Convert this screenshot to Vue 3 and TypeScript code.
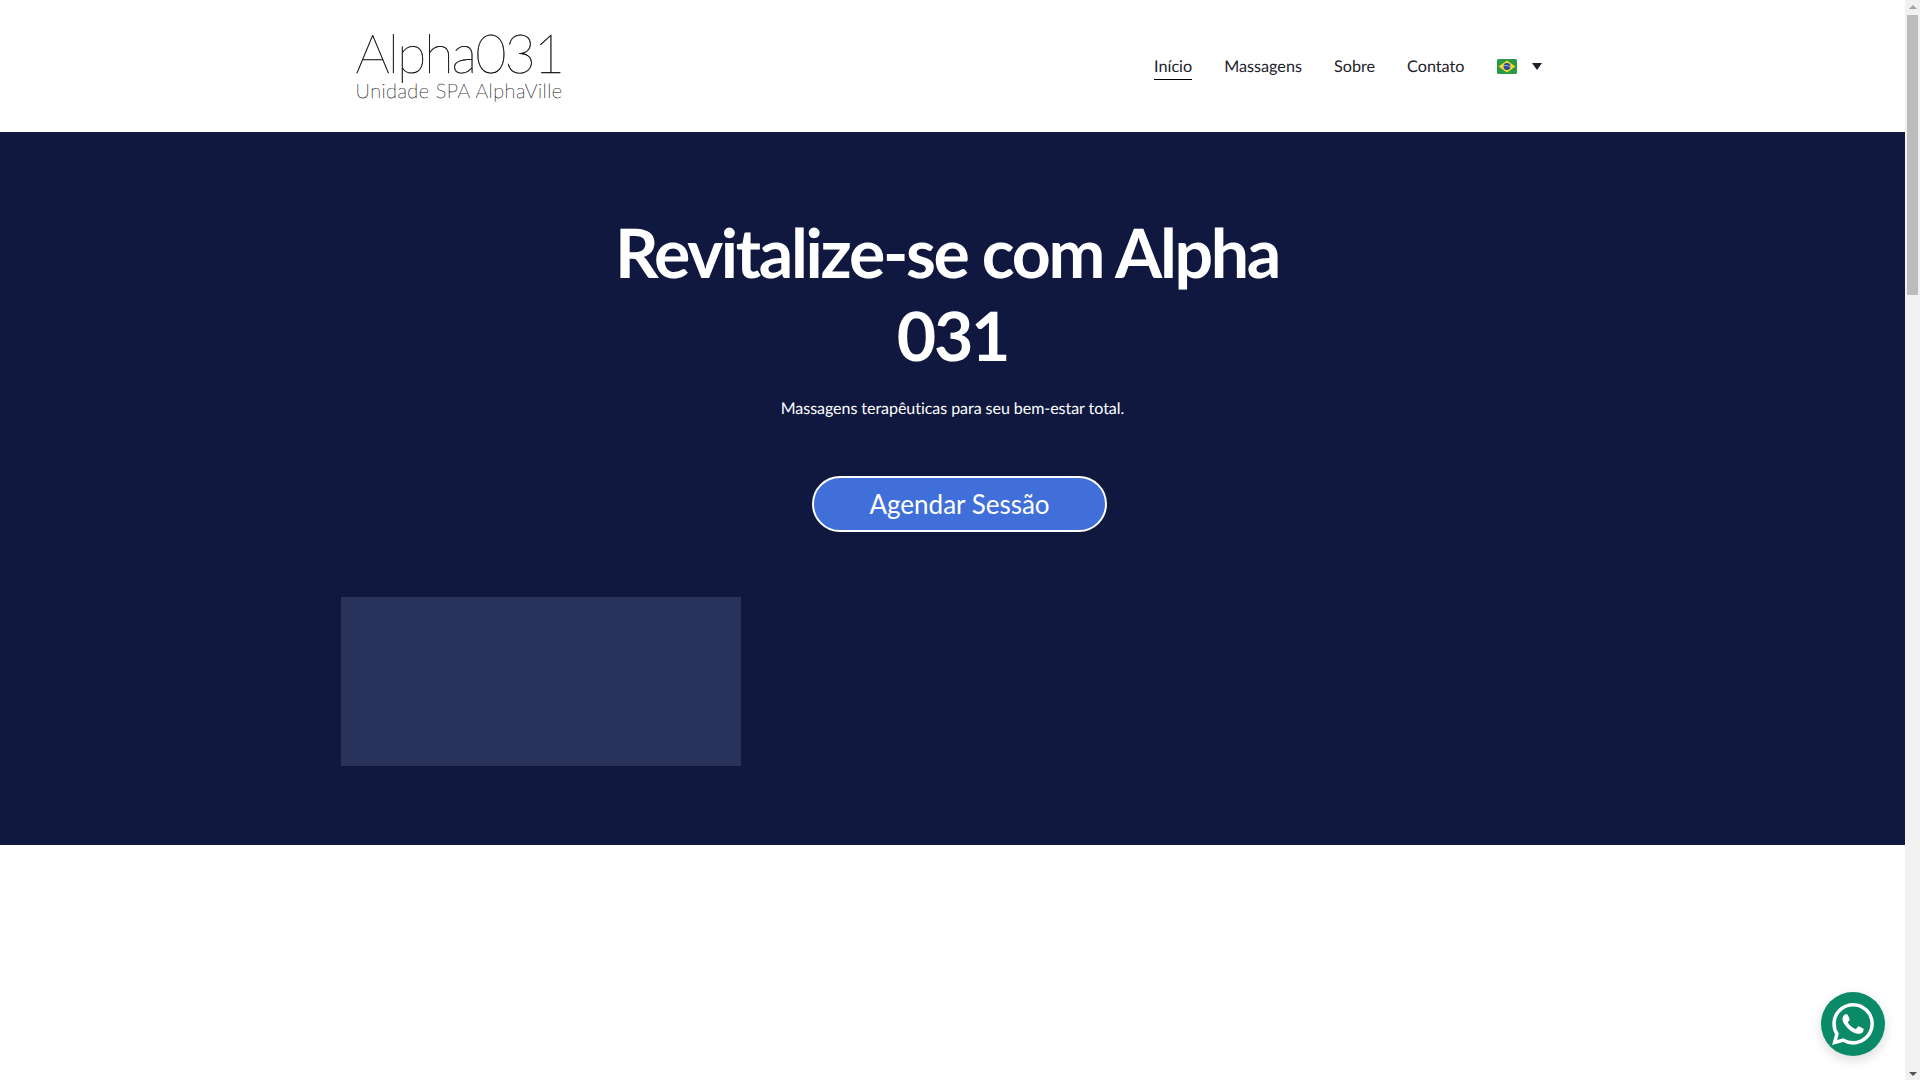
<template>
  <div class="page">
    <div class="main">
      <header class="site-header">
        <div class="container header-row">
          <a class="logo">
            <span class="logo-name">Alpha031</span>
            <span class="logo-sub">Unidade SPA AlphaVille</span>
          </a>
          <nav class="nav">
            <a
              v-for="item in navItems"
              :key="item.label"
              :class="['nav-link', { active: item.active }]"
            >
              {{ item.label }}
            </a>
            <div class="lang">
              <svg class="flag" viewBox="0 0 20 15" width="20" height="15">
                <rect width="20" height="15" rx="1.5" fill="#2a9a46" />
                <polygon points="10,1.6 18.4,7.5 10,13.4 1.6,7.5" fill="#f6d92e" />
                <circle cx="10" cy="7.5" r="3.4" fill="#2b4a9b" />
                <path d="M6.8 6.7c2.2-.4 4.4-.1 6.4 1.1" stroke="#e8eef5" stroke-width=".6" fill="none" />
              </svg>
              <span class="caret"></span>
            </div>
          </nav>
        </div>
      </header>

      <section class="hero">
        <div class="container hero-inner">
          <h1 class="hero-title">Revitalize-se com Alpha 031</h1>
          <p class="hero-text">Massagens terapêuticas para seu bem-estar total.</p>
          <button class="cta">Agendar Sessão</button>
          <div class="hero-card"></div>
        </div>
      </section>

      <a class="whatsapp">
        <svg viewBox="0 0 24 24" width="42" height="42" fill="#fff">
          <path d="M17.472 14.382c-.297-.149-1.758-.867-2.03-.967-.273-.099-.471-.148-.67.15-.197.297-.767.966-.94 1.164-.173.199-.347.223-.644.075-.297-.15-1.255-.463-2.39-1.475-.883-.788-1.48-1.761-1.653-2.059-.173-.297-.018-.458.13-.606.134-.133.298-.347.446-.52.149-.174.198-.298.298-.497.099-.198.05-.371-.025-.52-.075-.149-.669-1.612-.916-2.207-.242-.579-.487-.5-.669-.51-.173-.008-.371-.01-.57-.01-.198 0-.52.074-.792.372-.272.297-1.04 1.016-1.04 2.479 0 1.462 1.065 2.875 1.213 3.074.149.198 2.096 3.2 5.077 4.487.709.306 1.262.489 1.694.625.712.227 1.36.195 1.871.118.571-.085 1.758-.719 2.006-1.413.248-.694.248-1.289.173-1.413-.074-.124-.272-.198-.57-.347m-5.421 7.403h-.004a9.87 9.87 0 01-5.031-1.378l-.361-.214-3.741.982.998-3.648-.235-.374a9.86 9.86 0 01-1.51-5.26c.001-5.45 4.436-9.884 9.888-9.884 2.64 0 5.122 1.03 6.988 2.898a9.825 9.825 0 012.893 6.994c-.003 5.45-4.437 9.884-9.885 9.884m8.413-18.297A11.815 11.815 0 0012.05 0C5.495 0 .16 5.335.157 11.892c0 2.096.547 4.142 1.588 5.945L.057 24l6.305-1.654a11.882 11.882 0 005.683 1.448h.005c6.554 0 11.89-5.335 11.893-11.893a11.821 11.821 0 00-3.48-8.413z" />
        </svg>
      </a>
    </div>

    <div class="scrollbar">
      <span class="arrow up"></span>
      <span class="thumb"></span>
      <span class="arrow down"></span>
    </div>
  </div>
</template>

<script setup lang="ts">
const navItems = [
  { label: 'Início', active: true },
  { label: 'Massagens', active: false },
  { label: 'Sobre', active: false },
  { label: 'Contato', active: false }
];
</script>

<style>
html, body {
  margin: 0;
  overflow: hidden;
  background: #fff;
}
</style>

<style scoped>
.page {
  display: flex;
  height: 1080px;
  overflow: hidden;
  font-family: Lato, "Liberation Sans", sans-serif;
  text-rendering: geometricPrecision;
}

.main {
  position: relative;
  flex: 1;
  min-width: 0;
  background: #fff;
}

.container {
  width: 1224px;
  margin: 0 auto;
}

.site-header {
  height: 132px;
}

.header-row {
  display: flex;
  justify-content: space-between;
  align-items: center;
  height: 100%;
}

.logo {
  display: flex;
  flex-direction: column;
  margin-left: 15px;
  color: #000;
}

.logo-name {
  font-size: 54px;
  font-weight: 100;
  line-height: 50px;
  letter-spacing: -2px;
  -webkit-text-stroke: 0.35px #000;
}

.logo-sub {
  font-size: 20px;
  font-weight: 100;
  line-height: 26px;
  letter-spacing: 0.47px;
  -webkit-text-stroke: 0.25px #222;
}

.nav {
  display: flex;
  align-items: center;
  gap: 32px;
  margin-right: 23px;
}

.nav-link {
  font-size: 16.2px;
  line-height: 24px;
  color: #1d2129;
  padding: 3px 0 0;
  border-bottom: 1px solid transparent;
}

.nav-link.active {
  border-bottom-color: #000;
}

.lang {
  display: flex;
  align-items: center;
  gap: 15px;
}

.flag {
  display: block;
}

.caret {
  width: 0;
  height: 0;
  border-left: 5px solid transparent;
  border-right: 5px solid transparent;
  border-top: 7px solid #1d2129;
}

.hero {
  height: 713px;
  box-sizing: border-box;
  padding-top: 79px;
  background: #10183f;
  color: #fff;
}

.hero-inner {
  display: flex;
  flex-direction: column;
  align-items: center;
}

.hero-title {
  max-width: 720px;
  margin: 0;
  font-size: 68px;
  font-weight: 700;
  line-height: 83px;
  letter-spacing: -2.3px;
  text-align: center;
  text-indent: -11px;
}

.hero-text {
  margin: 20px 0 0;
  font-size: 16px;
  line-height: 24px;
  letter-spacing: -0.04px;
}

.cta {
  width: 295px;
  height: 56px;
  margin: 55px 0 0 14px;
  border: 2px solid #fff;
  border-radius: 28px;
  background: #416fd9;
  color: #fff;
  font-family: inherit;
  font-size: 26px;
}

.hero-card {
  align-self: flex-start;
  width: 400px;
  height: 169px;
  margin-top: 65px;
  background: #29325a;
}

.whatsapp {
  position: absolute;
  top: 992px;
  left: 1821px;
  display: flex;
  align-items: center;
  justify-content: center;
  width: 64px;
  height: 64px;
  border-radius: 50%;
  background: #0b8a67;
  box-shadow: 0 4px 12px rgba(0, 0, 0, 0.15);
}

.scrollbar {
  display: flex;
  flex-direction: column;
  align-items: center;
  width: 15px;
  background: #f1f1f1;
}

.arrow {
  width: 0;
  height: 0;
  border-left: 4px solid transparent;
  border-right: 4px solid transparent;
}

.arrow.up {
  margin: 5px 0 4px;
  border-bottom: 4px solid #a3a3a3;
}

.arrow.down {
  margin: auto 0 4px;
  border-top: 4px solid #505050;
}

.thumb {
  width: 11px;
  height: 280px;
  margin-top: 2px;
  background: #bcbcbc;
}
</style>
